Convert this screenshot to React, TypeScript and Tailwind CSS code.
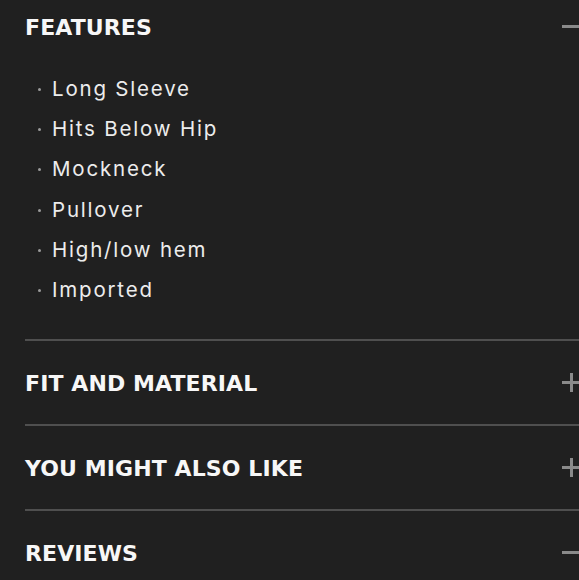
import React from "react";

const features = ["Long Sleeve", "Hits Below Hip", "Mockneck", "Pullover", "High/low hem", "Imported"];

function Minus() {
  return (
    <svg width="19" height="19" viewBox="0 0 19 19" className="shrink-0">
      <rect x="0" y="8" width="19" height="3" fill="#8a8a8a" />
    </svg>
  );
}

function Plus() {
  return (
    <svg width="19" height="19" viewBox="0 0 19 19" className="shrink-0">
      <rect x="0" y="8" width="19" height="3" fill="#8a8a8a" />
      <rect x="8" y="0" width="3" height="19" fill="#8a8a8a" />
    </svg>
  );
}

function Header({ title, open }: { title: string; open: boolean }) {
  return (
    <div className="flex h-[83px] items-center justify-between">
      <span
        className="mt-[2px] text-[22px] font-bold uppercase tracking-[0.1px] text-[#f7f7f7]"
        style={{ fontFamily: "'DejaVu Sans', sans-serif" }}
      >
        {title}
      </span>
      {open ? <Minus /> : <Plus />}
    </div>
  );
}

export default function App() {
  return (
    <div
      className="h-[580px] w-[579px] overflow-hidden bg-[#202020]"
      style={{ fontFamily: "Inter, 'Open Sans', sans-serif" }}
    >
      <div className="-mt-[15px] ml-[25px] w-[556px]">
        <div className="border-b-2 border-[#4f4f4f]">
          <Header title="Features" open />
          <ul className="pb-[28px] pt-[1px]">
            {features.map((f) => (
              <li key={f} className="flex h-[40.3px] items-center text-[20.5px] tracking-[1.8px] text-[#ececec]">
                <span className="ml-[13px] mr-[11px] h-[3px] w-[3px] rounded-full bg-[#9a9a9a]" />
                {f}
              </li>
            ))}
          </ul>
        </div>
        <div className="border-b-2 border-[#4f4f4f]">
          <Header title="Fit and Material" open={false} />
        </div>
        <div className="border-b-2 border-[#4f4f4f]">
          <Header title="You Might Also Like" open={false} />
        </div>
        <div>
          <Header title="Reviews" open />
        </div>
      </div>
    </div>
  );
}
